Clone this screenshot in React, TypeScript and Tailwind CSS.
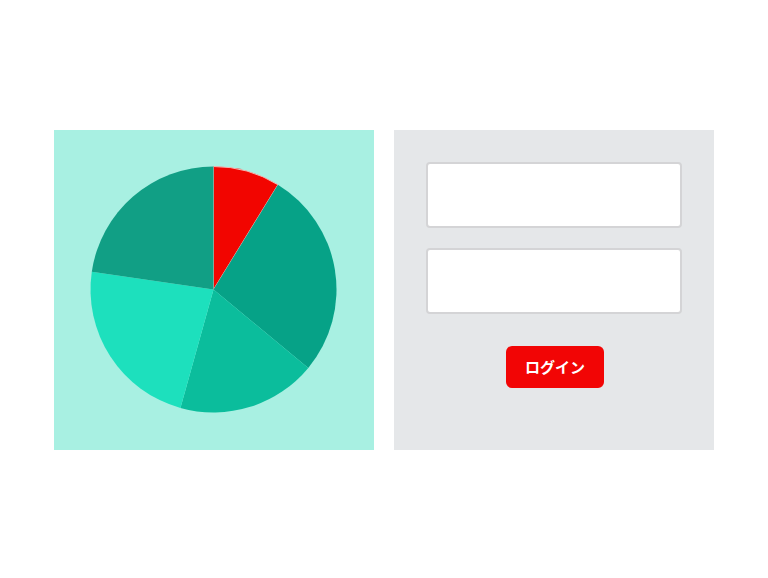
const slices = [
  { from: 0, to: 31.6, color: "#f20500", stroke: "#f5b4b0" },
  { from: 31.6, to: 129.6, color: "#06a287" },
  { from: 129.6, to: 195.6, color: "#0bbd9c" },
  { from: 195.6, to: 278.3, color: "#1de0bd" },
  { from: 278.3, to: 360, color: "#119f85" }
];

function point(cx: number, cy: number, r: number, deg: number) {
  const a = (deg * Math.PI) / 180;
  return [cx + r * Math.sin(a), cy - r * Math.cos(a)];
}

function slicePath(from: number, to: number) {
  const cx = 159.5;
  const cy = 159.5;
  const r = 123;
  const [x1, y1] = point(cx, cy, r, from);
  const [x2, y2] = point(cx, cy, r, to);
  const large = to - from > 180 ? 1 : 0;
  return `M ${cx} ${cy} L ${x1} ${y1} A ${r} ${r} 0 ${large} 1 ${x2} ${y2} Z`;
}

function PieChart() {
  return (
    <svg width="320" height="320" viewBox="0 0 320 320">
      {slices.map((s) => (
        <path
          key={s.from}
          d={slicePath(s.from, s.to)}
          fill={s.color}
          stroke={s.stroke ?? "none"}
          strokeWidth={s.stroke ? 1 : 0}
        />
      ))}
    </svg>
  );
}

export default function App() {
  return (
    <div className="flex h-[578px] w-[768px] items-center justify-center gap-5 bg-white pt-[2px] font-['Noto_Sans_CJK_JP',sans-serif]">
      <div className="h-[320px] w-[320px] bg-[#a8f0e2]">
        <PieChart />
      </div>
      <div className="flex h-[320px] w-[320px] flex-col items-center bg-[#e5e7e9] px-8 pt-8">
        <input
          type="text"
          className="h-[66px] w-full rounded border-2 border-[#d4d4d6] bg-white outline-none"
        />
        <input
          type="password"
          className="mt-5 h-[66px] w-full rounded border-2 border-[#d4d4d6] bg-white outline-none"
        />
        <button className="mt-[32px] ml-[2px] flex h-[42px] w-[98px] items-center justify-center rounded-md bg-[#f20505] text-[15px] font-bold text-white">
          ログイン
        </button>
      </div>
    </div>
  );
}
